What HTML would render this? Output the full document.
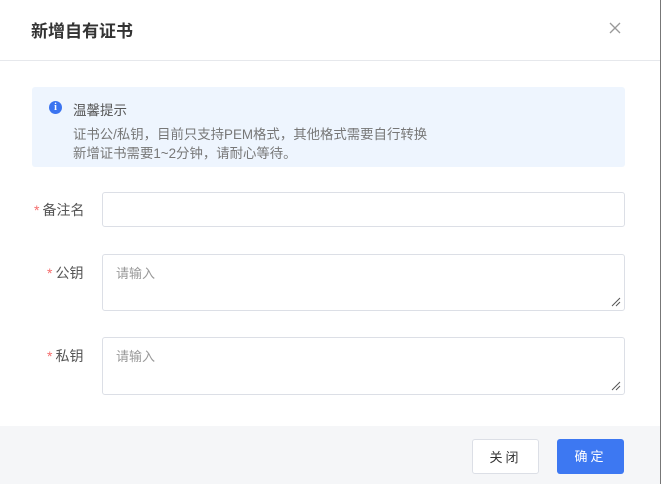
<!DOCTYPE html>
<html><head><meta charset="utf-8"><style>
*{box-sizing:border-box;margin:0;padding:0}
body{width:662px;height:484px;background:#fff;font-family:"Liberation Sans","Noto Sans CJK SC",sans-serif;position:relative;overflow:hidden;color:#333}
.abs{position:absolute}
.title{left:31px;top:17px;font-size:17px;font-weight:bold;color:#333}
.hl{left:0;top:60px;width:660px;height:1px;background:#e6e8ec}
.rb{left:660px;top:0;width:1px;height:484px;background:#777}
.alert{left:32px;top:87px;width:593px;height:80px;background:#eef5fe;border-radius:3px}
.icon{left:49px;top:101px;width:13px;height:13px;border-radius:50%;background:#3b74f0;color:#fff;font-size:10px;font-weight:bold;text-align:center;line-height:13px;font-family:"Liberation Serif",serif}
.at{left:73px;top:99px;font-size:13.5px;color:#555}
.al{left:73px;font-size:13.4px;color:#777;white-space:nowrap}
.lab{font-size:14px;color:#555}
.lab b{color:#f56c6c;font-weight:normal;margin-right:3px}
.inp{left:102px;width:523px;border:1px solid #dcdfe6;border-radius:3px;background:#fff}
.ph{left:116px;font-size:13px;color:#999}
.foot{left:0;top:426px;width:660px;height:58px;background:#f5f6f8}
.btn{top:439px;height:35px;width:67px;border-radius:3px;font-size:13px;text-align:center;line-height:35px;letter-spacing:3px}
</style></head><body>
<div class="abs title">新增自有证书</div>
<svg class="abs" style="left:609px;top:22px" width="12" height="12"><path d="M1 1L11 11M11 1L1 11" stroke="#999" stroke-width="1.3"/></svg>
<div class="abs hl"></div>
<div class="abs rb"></div>
<div class="abs alert"></div>
<div class="abs icon">i</div>
<div class="abs at">温馨提示</div>
<div class="abs al" style="top:123px">证书公/私钥，目前只支持PEM格式，其他格式需要自行转换</div>
<div class="abs al" style="top:142px">新增证书需要1~2分钟，请耐心等待。</div>
<div class="abs lab" style="left:34px;top:200px"><b>*</b>备注名</div>
<div class="abs inp" style="top:192px;height:35px"></div>
<div class="abs lab" style="left:47px;top:263px"><b>*</b>公钥</div>
<div class="abs inp" style="top:254px;height:57px"></div>
<div class="abs ph" style="top:263px">请输入</div>
<div class="abs lab" style="left:47px;top:346px"><b>*</b>私钥</div>
<div class="abs inp" style="top:337px;height:58px"></div>
<div class="abs ph" style="top:346px">请输入</div>
<svg class="abs" style="left:610px;top:296px" width="12" height="12"><path d="M2 10L10 2M6 10L10 6" stroke="#555" stroke-width="1"/></svg>
<svg class="abs" style="left:610px;top:380px" width="12" height="12"><path d="M2 10L10 2M6 10L10 6" stroke="#555" stroke-width="1"/></svg>
<div class="abs foot"></div>
<div class="abs btn" style="left:472px;background:#fff;border:1px solid #dcdfe6;color:#333">关闭</div>
<div class="abs btn" style="left:557px;background:#3d78f2;color:#fff">确定</div>
</body></html>
